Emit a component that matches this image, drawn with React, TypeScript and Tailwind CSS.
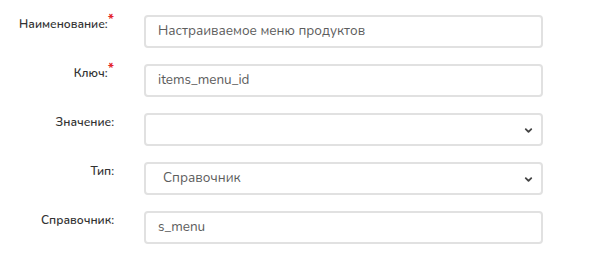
import { ChevronDown } from 'lucide-react'

interface RowProps {
  label: string
  required?: boolean
  children: React.ReactNode
}

function Row({ label, required, children }: RowProps) {
  return (
    <div className="flex items-start">
      <div className="w-[115px] shrink-0 pr-[1px] text-right text-[12px] font-semibold leading-[18px] text-[#333]">
        {label}
        {required && <span className="relative -top-[4px] text-[14px] font-bold text-[#e3262a]">*</span>}
      </div>
      <div className="ml-[29px] w-[399px]">{children}</div>
    </div>
  )
}

function TextField({ value }: { value: string }) {
  return (
    <div className="flex h-[33px] items-center rounded-[4px] border-2 border-[#e1e1e1] bg-white pl-[12px] text-[13.5px] text-[#5c5c5c]">
      {value}
    </div>
  )
}

function SelectField({ value }: { value?: string }) {
  return (
    <div className="relative flex h-[33px] items-center rounded-[4px] border-2 border-[#e1e1e1] bg-white pl-[17px] text-[13.5px] text-[#5c5c5c]">
      {value}
      <ChevronDown size={11} strokeWidth={4} className="absolute right-[7px] top-[10px] text-[#444]" />
    </div>
  )
}

export default function App() {
  return (
    <div className="h-[263px] w-[591px] bg-white pt-[15px] font-['Nunito','Lato','Noto_Sans',sans-serif]">
      <div className="flex flex-col gap-[16px]">
        <Row label="Наименование:" required>
          <TextField value="Настраиваемое меню продуктов" />
        </Row>
        <Row label="Ключ:" required>
          <TextField value="items_menu_id" />
        </Row>
        <Row label="Значение:">
          <SelectField />
        </Row>
        <Row label="Тип:">
          <SelectField value="Справочник" />
        </Row>
        <Row label="Справочник:">
          <TextField value="s_menu" />
        </Row>
      </div>
    </div>
  )
}
